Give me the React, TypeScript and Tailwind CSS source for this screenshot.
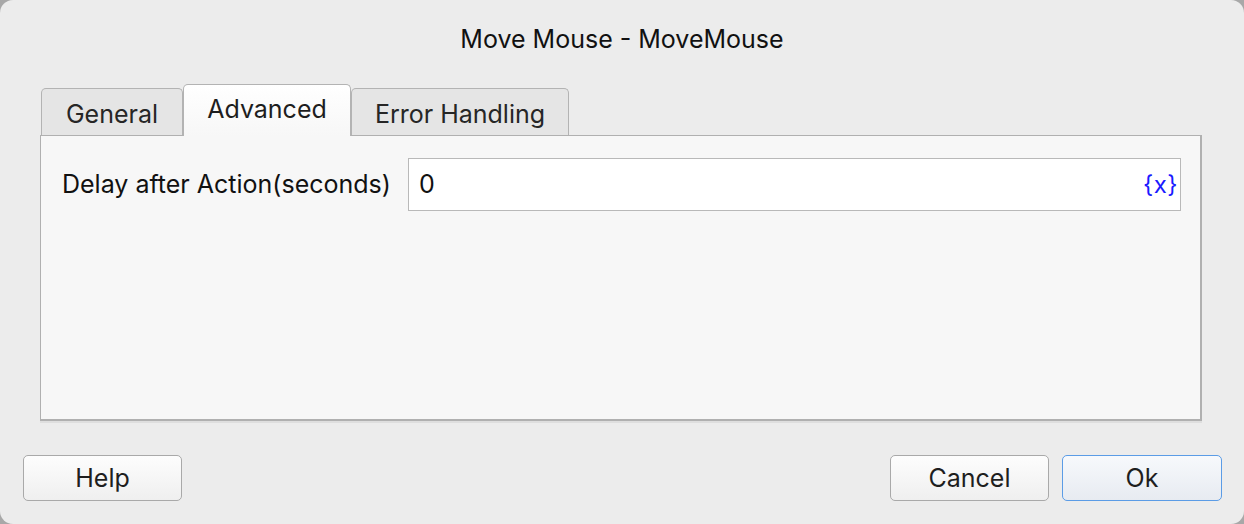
import React from "react";

const font = { fontFamily: "Inter, 'Noto Sans', sans-serif" };

function Tab({ label, active, width }: { label: string; active?: boolean; width: string }) {
    if (active) {
        return (
            <div className={`relative z-10 -mb-px h-[52px] ${width} rounded-t-[5px] border-x border-t border-[#b3b3b3] bg-gradient-to-b from-white to-[#f7f7f7] flex items-center justify-center text-[25px] text-[#1e1e1e]`}>
                <span className="-mt-[1px]">{label}</span>
            </div>
        );
    }
    return (
        <div className={`h-[47px] ${width} rounded-t-[5px] border-x border-t border-[#b3b3b3] bg-[#e5e5e5] flex items-center justify-center text-[25px] text-[#262626]`}>
            <span className="mt-[6px]">{label}</span>
        </div>
    );
}

function Button({ label, primary }: { label: string; primary?: boolean }) {
    return (
        <button
            className={
                primary
                    ? "w-[160px] h-[46px] pt-[2px] rounded-[5px] border-[1.5px] border-[#5b9ce6] bg-gradient-to-b from-[#f7f9fc] to-[#e7ebf1] text-[25px] text-[#1e1e1e]"
                    : "w-[159px] h-[46px] pt-[2px] rounded-[5px] border-[1.5px] border-[#a9a9a9] bg-gradient-to-b from-[#fdfdfd] to-[#efefef] text-[25px] text-[#1e1e1e]"
            }
        >
            {label}
        </button>
    );
}

export default function App() {
    return (
        <div className="w-[1244px] h-[524px] bg-[#a8a8a8]" style={font}>
            <div className="w-full h-full rounded-[13px] bg-[#ececec] flex flex-col">
                <div className="h-[84px] flex justify-center pt-[21px]">
                    <span className="text-[25px] text-[#111] leading-[36px]">Move Mouse - MoveMouse</span>
                </div>

                <div className="pl-[41px] flex items-end">
                    <Tab label="General" width="w-[142px]" />
                    <Tab label="Advanced" width="w-[168px]" active />
                    <Tab label="Error Handling" width="w-[218px]" />
                </div>

                <div className="ml-[40px] mr-[42px] h-[286px] border-l border-t border-r-2 border-b-2 border-[#b0b0b0] bg-[#f7f7f7] pl-[21px] pr-[19px] pt-[22px] shadow-[0_2px_0_#dedede]">
                    <div className="flex items-center">
                        <span className="text-[25px] text-[#111] w-[346px]">Delay after Action(seconds)</span>
                        <div className="flex-1 h-[53px] border border-[#b9b9b9] bg-white flex items-center pl-[10px] pr-[2px]">
                            <span className="flex-1 text-[25px] text-[#111]">0</span>
                            <span className="text-[24px] text-[#1b1bff] tracking-[0.5px]">{"{x}"}</span>
                        </div>
                    </div>
                </div>

                <div className="flex items-center pl-[23px] pr-[22px] mt-[34px]">
                    <Button label="Help" />
                    <div className="flex-1" />
                    <div className="flex gap-[13px]">
                        <Button label="Cancel" />
                        <Button label="Ok" primary />
                    </div>
                </div>
            </div>
        </div>
    );
}
